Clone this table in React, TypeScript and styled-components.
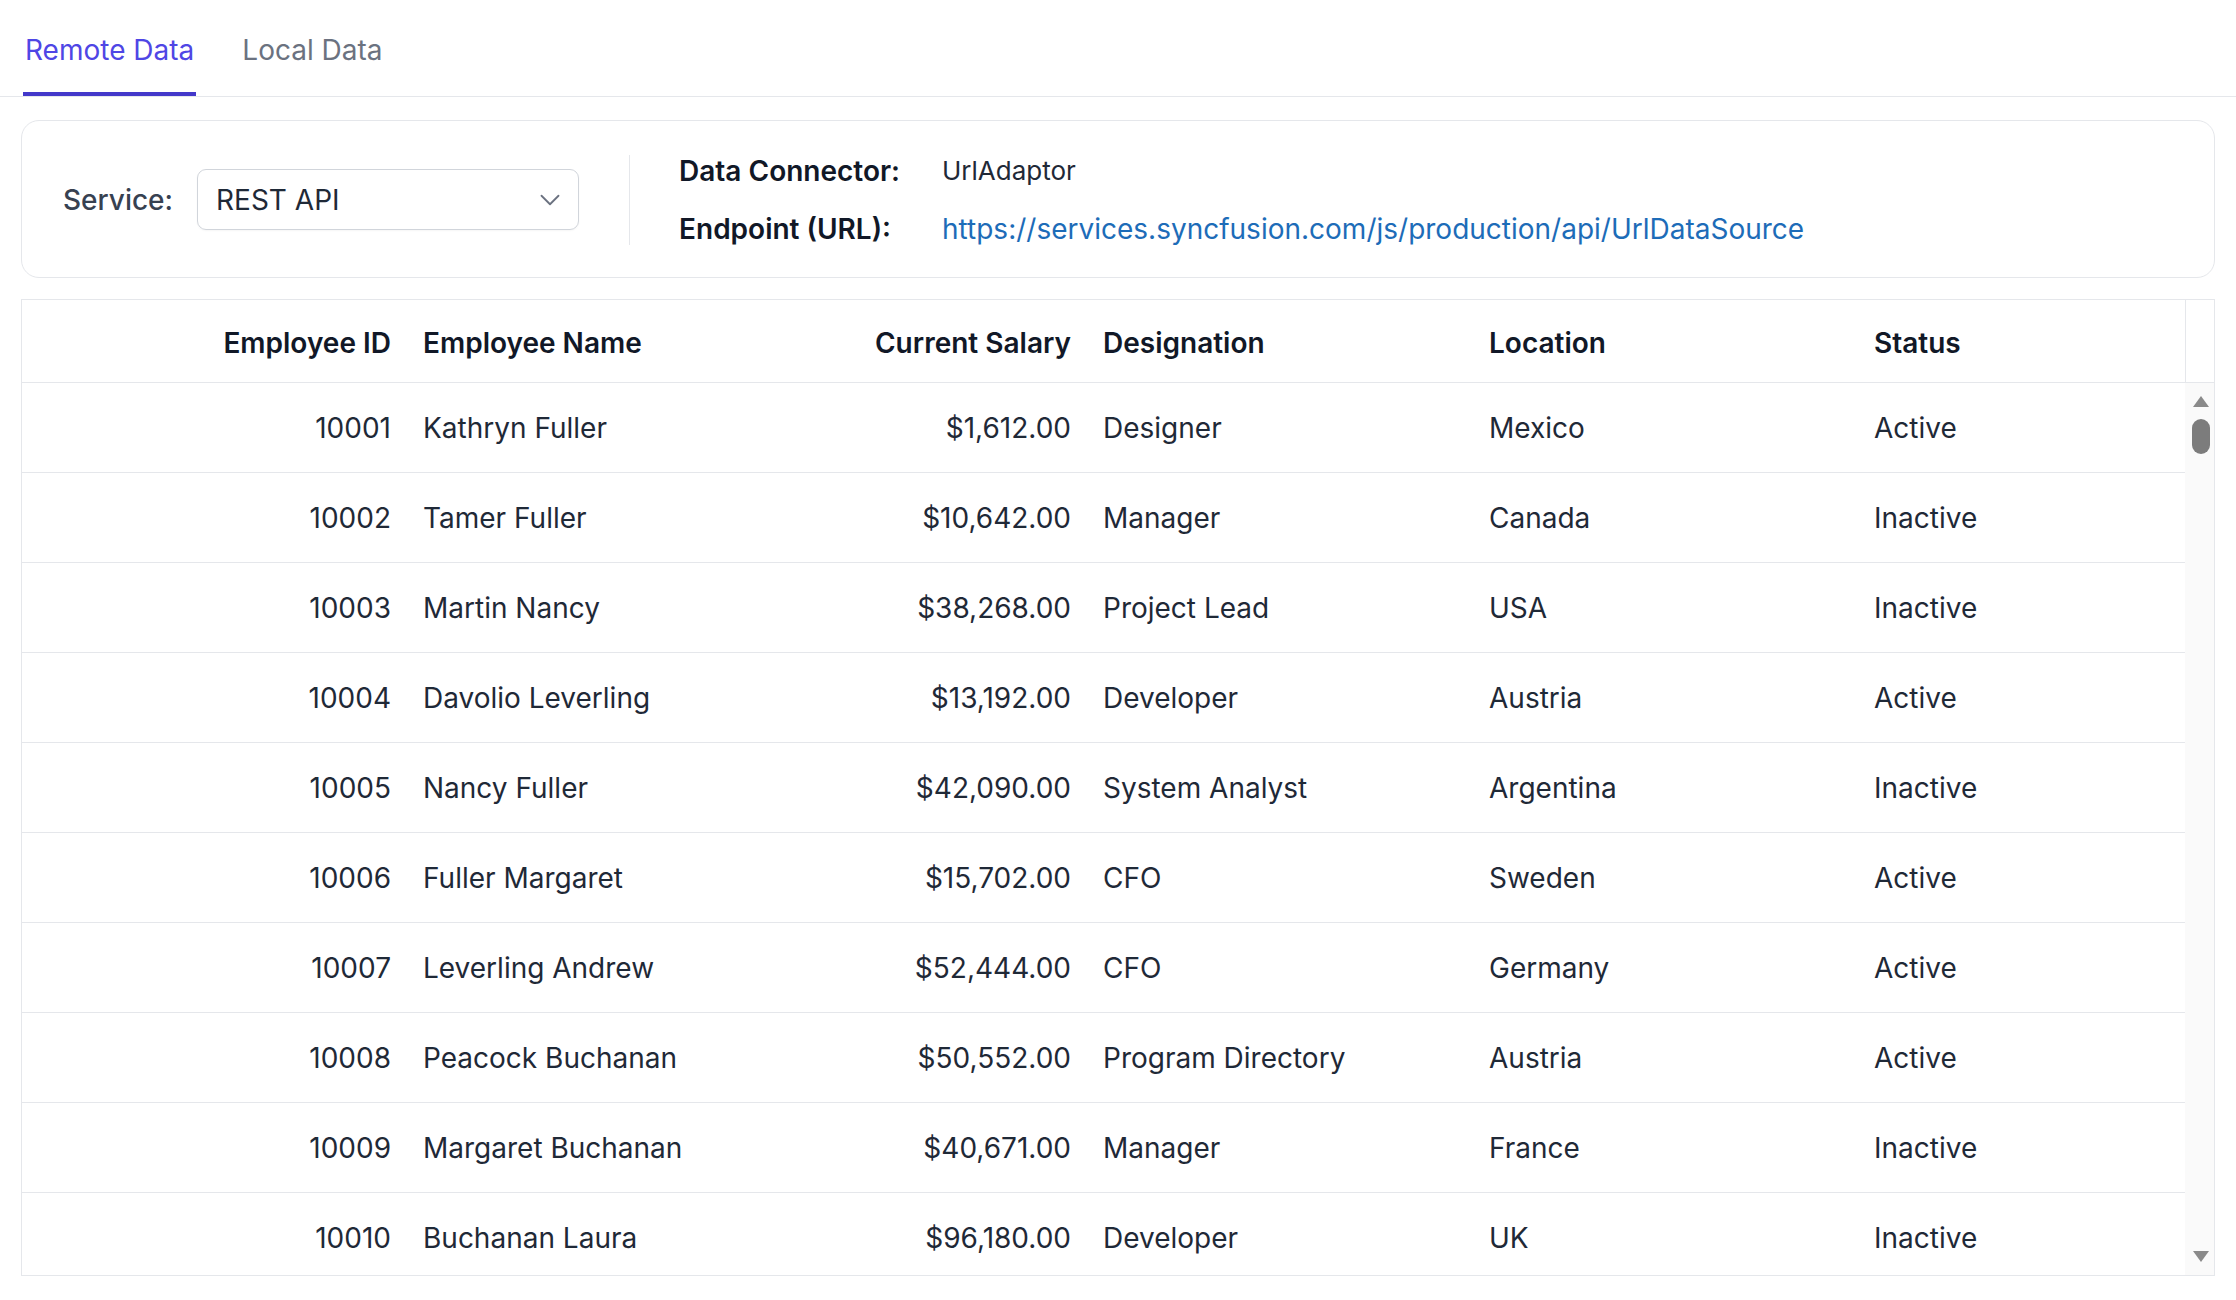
import React from "react";
import styled, { createGlobalStyle } from "styled-components";

const GlobalStyle = createGlobalStyle`
  html, body {
    margin: 0;
    padding: 0;
    background: #ffffff;
    font-family: Inter, "Noto Sans", "Liberation Sans", sans-serif;
    color: #1f2937;
  }
  * { box-sizing: border-box; }
`;

const Page = styled.div`
  width: 2236px;
  height: 1300px;
  overflow: hidden;
  display: flex;
  flex-direction: column;
`;

const TabBar = styled.div`
  display: flex;
  gap: 44px;
  padding-left: 23px;
  border-bottom: 1px solid #e5e7eb;
`;

const Tab = styled.div<{ $active?: boolean }>`
  padding: 33px 2px 25px;
  font-size: 28px;
  line-height: 34px;
  font-weight: 400;
  color: ${(p) => (p.$active ? "#4f46e5" : "#6b7280")};
  border-bottom: 4px solid ${(p) => (p.$active ? "#4338ca" : "transparent")};
`;

const Card = styled.div`
  margin: 23px 21px 0;
  height: 158px;
  border: 1px solid #e5e7eb;
  border-radius: 18px;
  display: flex;
  align-items: center;
  padding-left: 41px;
  padding-top: 1px;
`;

const ServiceLabel = styled.span`
  font-size: 28px;
  font-weight: 500;
  color: #374151;
  margin-right: 24px;
`;

const Select = styled.div`
  width: 382px;
  height: 61px;
  border: 1px solid #d1d5db;
  border-radius: 9px;
  display: flex;
  align-items: center;
  justify-content: space-between;
  padding: 0 11px 0 18px;
  font-size: 28px;
  color: #1f2937;
  box-shadow: 0 1px 2px rgba(0, 0, 0, 0.04);
`;

const Divider = styled.div`
  width: 1px;
  height: 90px;
  background: #e5e7eb;
  margin: 0 49px 0 50px;
`;

const InfoGrid = styled.div`
  display: grid;
  grid-template-columns: auto auto;
  column-gap: 42px;
  row-gap: 24px;
  align-items: center;
`;

const InfoLabel = styled.span`
  font-size: 28px;
  line-height: 34px;
  font-weight: 600;
  color: #111827;
`;

const InfoValue = styled.span`
  font-size: 26px;
  line-height: 34px;
  color: #1f2937;
`;

const InfoLink = styled.a`
  font-size: 28px;
  line-height: 34px;
  color: #1d6cb8;
  text-decoration: none;
`;

const Table = styled.div`
  margin: 21px 21px 0;
  border: 1px solid #e5e7eb;
  display: flex;
  flex-direction: column;
  height: 977px;
`;

const cols = "385px 340px 340px 386px 385px 1fr";

const HeaderRow = styled.div`
  display: grid;
  grid-template-columns: ${cols} 29px;
  height: 83px;
  border-bottom: 1px solid #e5e7eb;
  align-items: center;
  padding-top: 4px;
`;

const HeaderCell = styled.div<{ $right?: boolean }>`
  padding: 0 16px;
  font-size: 28px;
  font-weight: 600;
  color: #111827;
  text-align: ${(p) => (p.$right ? "right" : "left")};
  white-space: nowrap;
`;

const HeaderGutter = styled.div`
  align-self: stretch;
  margin-top: -4px;
  border-left: 1px solid #e5e7eb;
`;

const Body = styled.div`
  flex: 1;
  display: grid;
  grid-template-columns: 1fr 29px;
  overflow: hidden;
`;

const Rows = styled.div`
  overflow: hidden;
`;

const Row = styled.div`
  display: grid;
  grid-template-columns: ${cols};
  height: 90px;
  border-bottom: 1px solid #e5e7eb;
  align-items: center;
`;

const Cell = styled.div<{ $right?: boolean }>`
  padding: 0 16px;
  font-size: 28px;
  color: #1f2937;
  text-align: ${(p) => (p.$right ? "right" : "left")};
  white-space: nowrap;
`;

const Scrollbar = styled.div`
  background: #fafafa;
  display: flex;
  flex-direction: column;
  align-items: center;
  padding: 13px 0 13px 3px;
`;

const Arrow = styled.div<{ $down?: boolean }>`
  width: 0;
  height: 0;
  border-left: 8px solid transparent;
  border-right: 8px solid transparent;
  ${(p) =>
    p.$down
      ? "border-top: 11px solid #8a8a8a;"
      : "border-bottom: 11px solid #8a8a8a;"}
`;

const Thumb = styled.div`
  width: 18px;
  height: 35px;
  border-radius: 9px;
  background: #7c7c7c;
  margin-top: 12px;
`;

const Spacer = styled.div`
  flex: 1;
`;

type Emp = {
  id: number;
  name: string;
  salary: string;
  designation: string;
  location: string;
  status: string;
};

const data: Emp[] = [
  { id: 10001, name: "Kathryn Fuller", salary: "$1,612.00", designation: "Designer", location: "Mexico", status: "Active" },
  { id: 10002, name: "Tamer Fuller", salary: "$10,642.00", designation: "Manager", location: "Canada", status: "Inactive" },
  { id: 10003, name: "Martin Nancy", salary: "$38,268.00", designation: "Project Lead", location: "USA", status: "Inactive" },
  { id: 10004, name: "Davolio Leverling", salary: "$13,192.00", designation: "Developer", location: "Austria", status: "Active" },
  { id: 10005, name: "Nancy Fuller", salary: "$42,090.00", designation: "System Analyst", location: "Argentina", status: "Inactive" },
  { id: 10006, name: "Fuller Margaret", salary: "$15,702.00", designation: "CFO", location: "Sweden", status: "Active" },
  { id: 10007, name: "Leverling Andrew", salary: "$52,444.00", designation: "CFO", location: "Germany", status: "Active" },
  { id: 10008, name: "Peacock Buchanan", salary: "$50,552.00", designation: "Program Directory", location: "Austria", status: "Active" },
  { id: 10009, name: "Margaret Buchanan", salary: "$40,671.00", designation: "Manager", location: "France", status: "Inactive" },
  { id: 10010, name: "Buchanan Laura", salary: "$96,180.00", designation: "Developer", location: "UK", status: "Inactive" },
];

const Chevron = () => (
  <svg width="34" height="34" viewBox="0 0 24 24" fill="none" stroke="#6b7280" strokeWidth="1.3" strokeLinecap="round" strokeLinejoin="round">
    <path d="m6 9 6 6 6-6" />
  </svg>
);

export default function App() {
  return (
    <Page>
      <GlobalStyle />
      <TabBar>
        <Tab $active>Remote Data</Tab>
        <Tab>Local Data</Tab>
      </TabBar>
      <Card>
        <ServiceLabel>Service:</ServiceLabel>
        <Select>
          <span>REST API</span>
          <Chevron />
        </Select>
        <Divider />
        <InfoGrid>
          <InfoLabel>Data Connector:</InfoLabel>
          <InfoValue>UrlAdaptor</InfoValue>
          <InfoLabel>Endpoint (URL):</InfoLabel>
          <InfoLink href="#">https://services.syncfusion.com/js/production/api/UrlDataSource</InfoLink>
        </InfoGrid>
      </Card>
      <Table>
        <HeaderRow>
          <HeaderCell $right>Employee ID</HeaderCell>
          <HeaderCell>Employee Name</HeaderCell>
          <HeaderCell $right>Current Salary</HeaderCell>
          <HeaderCell>Designation</HeaderCell>
          <HeaderCell>Location</HeaderCell>
          <HeaderCell>Status</HeaderCell>
          <HeaderGutter />
        </HeaderRow>
        <Body>
          <Rows>
            {data.map((e) => (
              <Row key={e.id}>
                <Cell $right>{e.id}</Cell>
                <Cell>{e.name}</Cell>
                <Cell $right>{e.salary}</Cell>
                <Cell>{e.designation}</Cell>
                <Cell>{e.location}</Cell>
                <Cell>{e.status}</Cell>
              </Row>
            ))}
          </Rows>
          <Scrollbar>
            <Arrow />
            <Thumb />
            <Spacer />
            <Arrow $down />
          </Scrollbar>
        </Body>
      </Table>
    </Page>
  );
}
